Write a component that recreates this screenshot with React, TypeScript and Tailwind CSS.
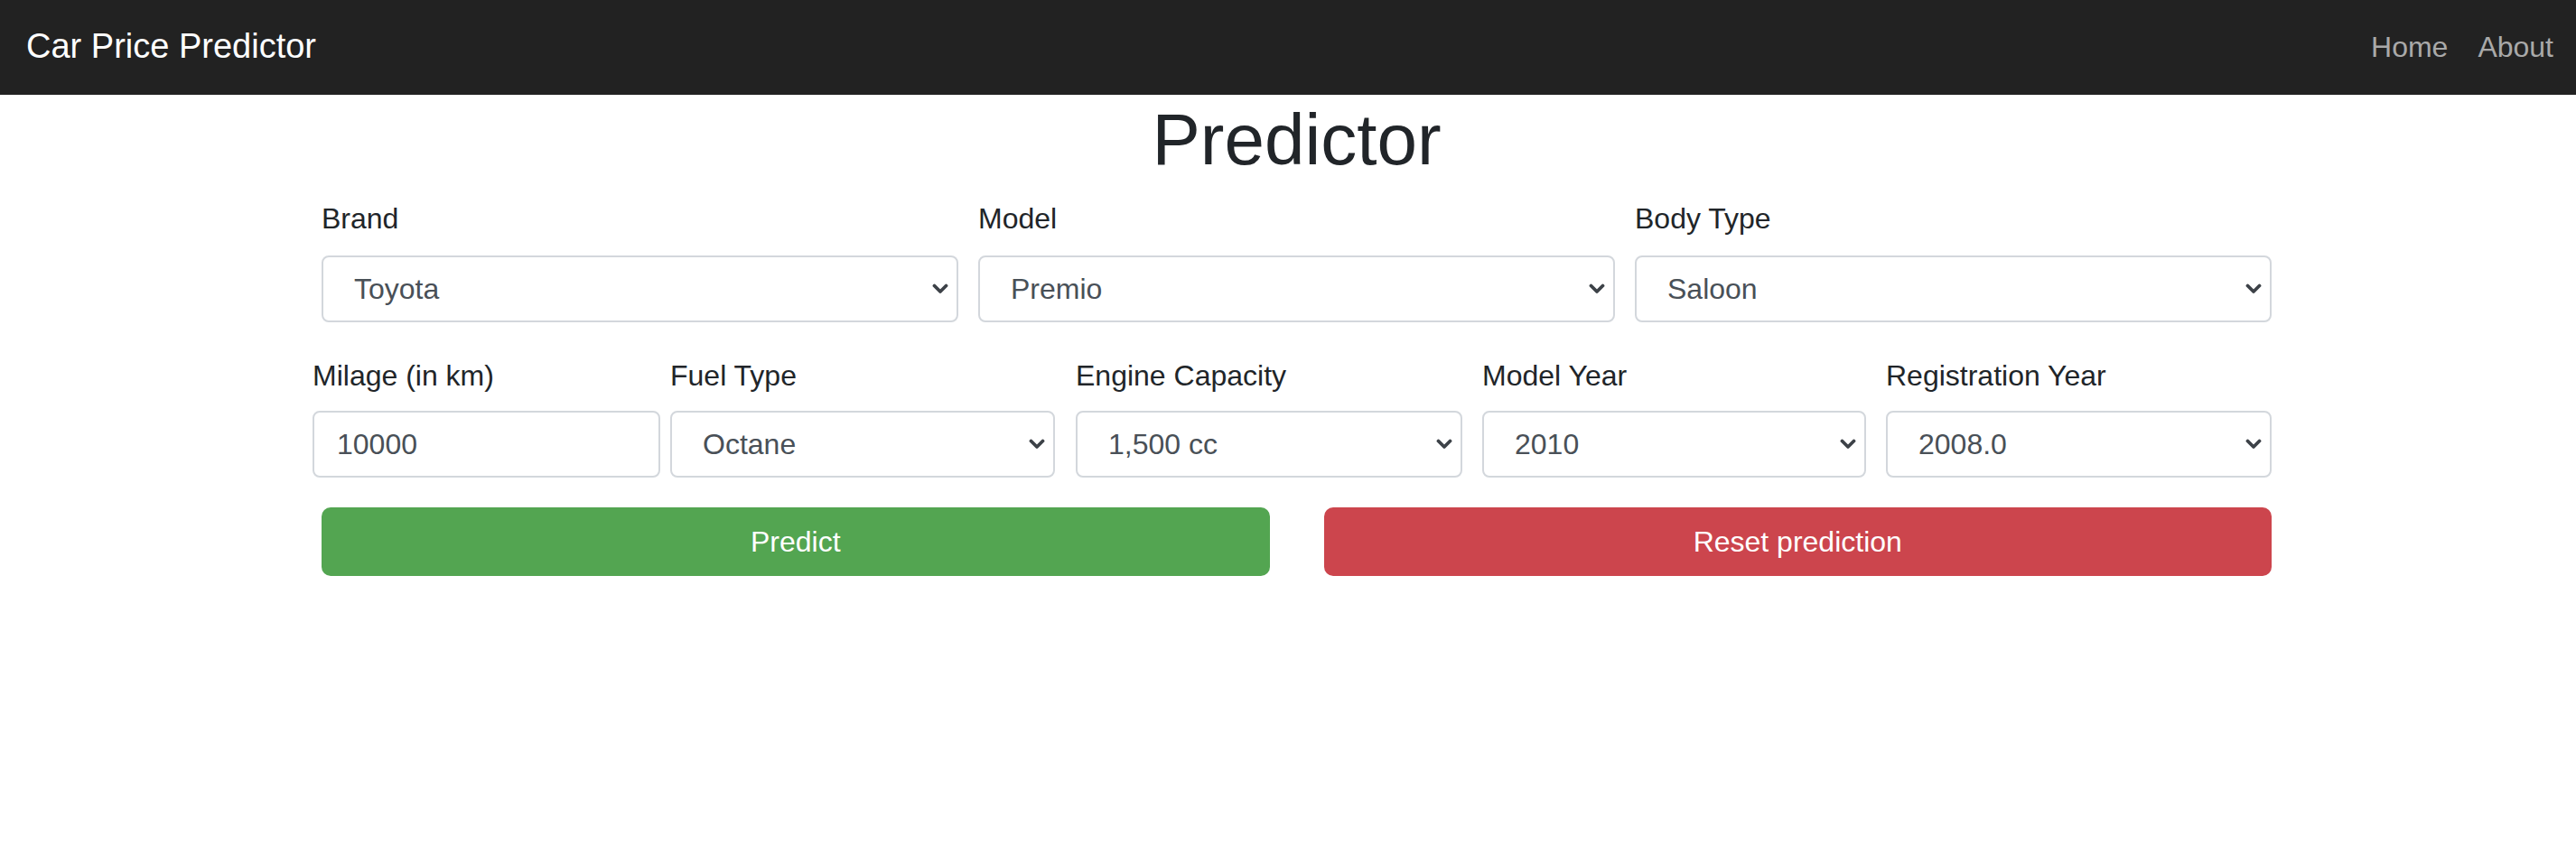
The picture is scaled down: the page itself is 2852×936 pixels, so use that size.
import React, { useState } from 'react'

const Chevron = () => (
  <svg className="absolute right-[9px] top-1/2 -translate-y-1/2" width="18" height="12" viewBox="0 0 18 12" fill="none">
    <path d="M2.5 2.5 L9 9 L15.5 2.5" stroke="#3d4248" strokeWidth="3.8" strokeLinecap="round" strokeLinejoin="round" />
  </svg>
)

const SelectBox = ({ value, width }: { value: string; width: string }) => (
  <div className={`relative ${width} h-[74px] flex items-center pl-[34px] border-2 border-[#d3d7dc] rounded-[8px] bg-white text-[32px] text-[#495057]`}>
    <span>{value}</span>
    <Chevron />
  </div>
)

const Field = ({ label, children }: { label: string; children: React.ReactNode }) => (
  <div className="flex flex-col">
    <label className="block text-[32px] leading-[48px] text-[#212529] mb-[17px]">{label}</label>
    {children}
  </div>
)

const App = () => {
  const [milage, setMilage] = useState<string>('10000')

  return (
    <div className="min-h-screen bg-white font-['Liberation_Sans',Arial,sans-serif]">
      {/* Navbar */}
      <nav className="h-[105px] bg-[#222222] flex items-center justify-between pl-[29px] pr-[25px]">
        <div className="text-[38px] text-white leading-none pb-[3px]">Car Price Predictor</div>
        <div className="flex items-center gap-[33px] text-[32px] text-[#a9a9a9] pb-[1px]">
          <span>Home</span>
          <span>About</span>
        </div>
      </nav>

      <div className="ml-[356px] w-[2159px]">
        <h1 className="mt-[2px] text-[80px] leading-[96px] text-center text-[#212529]">Predictor</h1>

        {/* Row 1 */}
        <div className="mt-[15px] grid grid-cols-3 gap-[22px]">
          <Field label="Brand">
            <SelectBox value="Toyota" width="w-full" />
          </Field>
          <Field label="Model">
            <SelectBox value="Premio" width="w-full" />
          </Field>
          <Field label="Body Type">
            <SelectBox value="Saloon" width="w-full" />
          </Field>
        </div>

        {/* Row 2 */}
        <div className="mt-[35px] -ml-[10px] flex">
          <div className="w-[385px] mr-[11px]">
            <label className="block text-[32px] leading-[48px] text-[#212529] mb-[15px]">Milage (in km)</label>
            <input
              value={milage}
              onChange={(e) => setMilage(e.target.value)}
              className="w-full h-[74px] pl-[25px] border-2 border-[#d3d7dc] rounded-[8px] text-[32px] text-[#495057] outline-none"
            />
          </div>
          <div className="w-[426px] mr-[23px]">
            <label className="block text-[32px] leading-[48px] text-[#212529] mb-[15px]">Fuel Type</label>
            <SelectBox value="Octane" width="w-full" />
          </div>
          <div className="w-[428px] mr-[22px]">
            <label className="block text-[32px] leading-[48px] text-[#212529] mb-[15px]">Engine Capacity</label>
            <SelectBox value="1,500 cc" width="w-full" />
          </div>
          <div className="w-[425px] mr-[22px]">
            <label className="block text-[32px] leading-[48px] text-[#212529] mb-[15px]">Model Year</label>
            <SelectBox value="2010" width="w-full" />
          </div>
          <div className="w-[427px]">
            <label className="block text-[32px] leading-[48px] text-[#212529] mb-[15px]">Registration Year</label>
            <SelectBox value="2008.0" width="w-full" />
          </div>
        </div>

        {/* Buttons */}
        <div className="mt-[33px] grid grid-cols-2 gap-[60px]">
          <button className="h-[76px] rounded-[10px] bg-[#53a551] text-white text-[32px]">Predict</button>
          <button className="h-[76px] rounded-[10px] bg-[#cc454d] text-white text-[32px]">Reset prediction</button>
        </div>
      </div>
    </div>
  )
}

export default App
